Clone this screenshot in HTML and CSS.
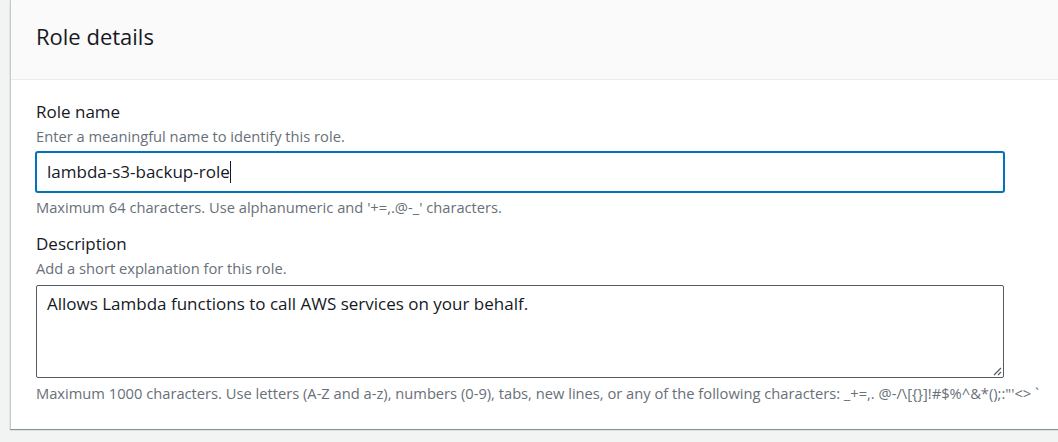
FILE: index.html
```html
<!DOCTYPE html>
<html>
<head>
<meta charset="utf-8">
<link rel="stylesheet" href="styles.css">
</head>
<body>
<div class="page">
  <section class="card">
    <header class="card-header">
      <h2 class="title">Role details</h2>
    </header>
    <div class="card-body">
      <div class="field">
        <label class="label">Role name</label>
        <div class="desc">Enter a meaningful name to identify this role.</div>
        <div class="input focused"><span>lambda-s3-backup-role</span><span class="caret"></span></div>
        <div class="constraint">Maximum 64 characters. Use alphanumeric and '+=,.@-_' characters.</div>
      </div>
      <div class="field">
        <label class="label">Description</label>
        <div class="desc">Add a short explanation for this role.</div>
        <div class="textarea">Allows Lambda functions to call AWS services on your behalf.
          <svg class="grip" width="10" height="10" viewBox="0 0 10 10"><path d="M9 2 L2 9 M9 6 L6 9" stroke="#545b64" stroke-width="1.2" fill="none"/></svg>
        </div>
        <div class="constraint">Maximum 1000 characters. Use letters (A-Z and a-z), numbers (0-9), tabs, new lines, or any of the following characters: _+=,. @-/\[{}]!#$%^&amp;*();:"'&lt;&gt; `</div>
      </div>
    </div>
  </section>
</div>
</body>
</html>
```

FILE: styles.css
```css
html, body {
  margin: 0;
  padding: 0;
  background: #f2f3f3;
  font-family: "Open Sans", "Noto Sans", sans-serif;
  color: #16191f;
  overflow: hidden;
}
.page {
  width: 1058px;
  height: 442px;
  padding-left: 10px;
  box-sizing: border-box;
}
.card {
  width: 1060px;
  height: 429px;
  background: #fff;
  border-left: 1px solid #c5cbcb;
  box-shadow: 0 1px 1px 0 rgba(0,28,36,0.35), 1px 1px 1px 0 rgba(0,28,36,0.15);
  box-sizing: border-box;
}
.card-header {
  height: 80px;
  background: #fafafa;
  border-bottom: 1px solid #eaeded;
  box-sizing: border-box;
  padding: 21px 25px 0;
}
.title {
  margin: 0;
  font-weight: 400;
  font-size: 22px;
  line-height: 30px;
}
.card-body {
  width: 968px;
  padding: 21px 0 0 25px;
}
.field + .field { margin-top: 16px; }
.label {
  display: block;
  font-size: 17px;
  line-height: 22px;
}
.desc {
  font-size: 14.7px;
  line-height: 22px;
  color: #687078;
  margin-top: 2px;
}
.input {
  margin: 4px -1px 0;
  height: 42px;
  border: 2px solid #0073bb;
  border-radius: 3px;
  box-sizing: border-box;
  padding: 0 10px;
  display: flex;
  align-items: center;
  font-size: 17px;
  line-height: 22px;
}
.caret {
  width: 1px;
  height: 22px;
  background: #16191f;
}
.constraint {
  font-size: 14.7px;
  line-height: 20px;
  color: #687078;
  margin-top: 4px;
  white-space: nowrap;
}
.textarea {
  position: relative;
  margin-top: 6px;
  height: 93px;
  border: 1px solid #545b64;
  border-radius: 2px;
  box-sizing: border-box;
  padding: 7px 10px;
  font-size: 17px;
  line-height: 22px;
}
.textarea + .constraint { margin-top: 5px; }
.grip {
  position: absolute;
  right: 1px;
  bottom: 1px;
}
```
